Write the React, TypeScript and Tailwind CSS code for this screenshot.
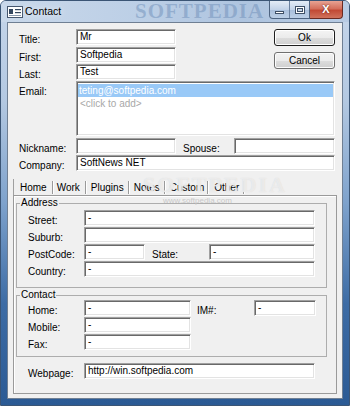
import React from "react";

function Box({ className, text }: { className: string; text?: string }) {
  return (
    <div
      className={
        "h-[16px] shrink-0 bg-white border border-t-[#a0a0a0] border-l-[#a0a0a0] border-b-white border-r-white shadow-[inset_1px_1px_0_#696969,inset_-1px_-1px_0_#e3e3e3] pl-[3px] flex items-center leading-[12px] text-black whitespace-nowrap overflow-hidden " +
        className
      }
    >
      {text}
    </div>
  );
}

function Label({ className, children }: { className: string; children: React.ReactNode }) {
  return <div className={"shrink-0 mt-[5px] leading-[12px] whitespace-nowrap " + className}>{children}</div>;
}

function Sep() {
  return <div className="w-[2px] h-[13px] border-l border-l-[#9a9a9a] border-r border-r-white shrink-0" />;
}

export default function App() {
  return (
    <div className="w-[350px] h-[406px] relative overflow-hidden font-['Liberation_Sans',Arial,sans-serif] text-[10px] text-black rounded-t-[6px] border border-[#3b5575] bg-[linear-gradient(180deg,#c6d6ea_0%,#b3c8e1_25%,#7ea2cc_50%,#3d6ca5_75%,#2b5a94_100%)] flex flex-col">
      {/* Title bar */}
      <div className="relative h-[21px] shrink-0 flex items-center pl-[6px] bg-[linear-gradient(90deg,#c9d8ea_0%,#bccfe6_40%,#aec4df_70%,#b8cbe3_100%)]">
        <div className="absolute left-[134px] top-[0px] font-['Liberation_Serif',serif] font-bold text-[21px] tracking-[1px] text-[#6f8fb9]/50 leading-none select-none">
          SOFTPEDIA
        </div>
        <svg width="16" height="12" viewBox="0 0 16 12" className="relative shrink-0">
          <rect x="0.5" y="0.5" width="15" height="11" fill="#ffffff" stroke="#45566e" />
          <rect x="2" y="3" width="4" height="5" fill="#34475f" />
          <rect x="8" y="3" width="6" height="1.2" fill="#34475f" />
          <rect x="8" y="6" width="6" height="1.2" fill="#34475f" />
          <rect x="2" y="9" width="12" height="1" fill="#8898ad" />
        </svg>
        <span className="relative ml-[2px] text-[10.5px] text-black [text-shadow:0_0_6px_#ffffff]">Contact</span>
        <div className="absolute top-0 right-[6px] flex h-[18px]">
          <div className="w-[41px] h-[18px] flex rounded-bl-[4px] border border-t-0 border-[#4d6380] bg-[linear-gradient(180deg,#e4ecf6_0%,#c3d3e8_50%,#a9bfdc_51%,#bccfe6_100%)] overflow-hidden">
            <div className="w-[20px] h-full flex items-center justify-center border-r border-r-[#6b819f]">
              <div className="w-[9px] h-[3px] bg-white border border-[#3e4f66] mt-[5px]" />
            </div>
            <div className="flex-1 h-full flex items-center justify-center">
              <div className="w-[10px] h-[8px] border border-[#3e4f66] bg-white flex items-center justify-center">
                <div className="w-[6px] h-[4px] border border-[#3e4f66] bg-[#c7d5e7]" />
              </div>
            </div>
          </div>
          <div className="w-[33px] h-[18px] rounded-br-[4px] border border-t-0 border-l-0 border-[#6a2a22] bg-[linear-gradient(180deg,#e8a393_0%,#d46f5c_45%,#c24a35_55%,#d0725c_100%)] flex items-center justify-center">
            <span className="text-white font-bold text-[11px] leading-none [text-shadow:0_0_2px_#5a1a10]">X</span>
          </div>
        </div>
      </div>

      {/* Client area */}
      <div className="relative mx-[6px] h-[377px] border border-[#6f7f93] bg-[#f0f0f0] flex flex-col">
        {/* watermarks */}
        <div className="absolute left-[135px] top-[151px] font-['Liberation_Serif',serif] font-bold text-[22px] tracking-[2px] text-white/50 [text-shadow:0_0_1px_#d4d4d4] leading-none pointer-events-none select-none">
          SOFTPEDIA
        </div>
        <div className="absolute left-[155px] top-[174px] text-[8px] text-[#c8c8c8] leading-none pointer-events-none select-none">
          www.softpedia.com
        </div>

        {/* Top fields */}
        <div className="relative flex pt-[6px] pl-[11px] pr-[7px]">
          <div className="flex flex-col">
            <div className="flex h-[16px]">
              <Label className="w-[57px]">Title:</Label>
              <Box className="w-[100px]" text="Mr" />
            </div>
            <div className="flex h-[16px] mt-[2px]">
              <Label className="w-[57px]">First:</Label>
              <Box className="w-[100px]" text="Softpedia" />
            </div>
            <div className="flex h-[16px] mt-[1px]">
              <Label className="w-[57px]">Last:</Label>
              <Box className="w-[100px]" text="Test" />
            </div>
          </div>
          <div className="ml-auto flex flex-col gap-[6px]">
            <div className="w-[61px] h-[17px] rounded-[3px] border border-[#1e1e1e] shadow-[inset_0_0_0_1px_#ffffff] bg-[linear-gradient(180deg,#f4f4f4_0%,#ebebeb_50%,#dddddd_51%,#cfcfcf_100%)] flex items-center justify-center leading-none">
              Ok
            </div>
            <div className="w-[61px] h-[17px] rounded-[3px] border border-[#707070] shadow-[inset_0_0_0_1px_#fcfcfc] bg-[linear-gradient(180deg,#f2f2f2_0%,#ebebeb_50%,#dddddd_51%,#cfcfcf_100%)] flex items-center justify-center leading-none">
              Cancel
            </div>
          </div>
        </div>

        <div className="relative flex mt-[1px] pl-[11px]">
          <Label className="w-[57px]">Email:</Label>
          <div className="w-[259px] h-[55px] bg-white border border-t-[#a0a0a0] border-l-[#a0a0a0] border-b-white border-r-white shadow-[inset_1px_1px_0_#696969,inset_-1px_-1px_0_#e3e3e3] p-[1px] flex flex-col">
            <div className="h-[13px] mt-[1px] bg-[#99c9f7] text-white leading-[13px] pl-[1px] whitespace-nowrap">teting@softpedia.com</div>
            <div className="h-[13px] leading-[13px] pl-[2px] text-[#a8a8a8] whitespace-nowrap">&lt;click to add&gt;</div>
          </div>
        </div>

        <div className="relative flex h-[16px] mt-[2px] pl-[11px]">
          <Label className="w-[57px]">Nickname:</Label>
          <Box className="w-[100px]" />
          <Label className="w-[51px] ml-[7px]">Spouse:</Label>
          <Box className="w-[101px]" />
        </div>
        <div className="relative flex h-[16px] mt-[1px] pl-[11px]">
          <Label className="w-[57px]">Company:</Label>
          <Box className="w-[259px]" text="SoftNews NET" />
        </div>

        {/* Tabs */}
        <div className="ml-[5px] w-[324px] mt-[8px] flex flex-col">
          <div className="h-[16px] flex items-center">
            <div className="w-[1px] h-[16px] bg-[#a0a0a0]" />
            <span className="ml-[6px] mr-[5px]">Home</span>
            <Sep />
            <span className="ml-[3px] mr-[5px]">Work</span>
            <Sep />
            <span className="ml-[4px] mr-[4px]">Plugins</span>
            <Sep />
            <span className="ml-[4px] mr-[4px]">Notes</span>
            <Sep />
            <span className="ml-[4px] mr-[3px]">Custom</span>
            <Sep />
            <span className="ml-[5px] mr-[4px]">Other</span>
            <Sep />
          </div>
          <div className="h-[199px] border border-[#9a9a9a] shadow-[inset_1px_1px_0_#ffffff] flex flex-col">
            <fieldset className="ml-[2px] mt-[1px] w-[311px] border border-[#adadad] pb-[10px]">
              <legend className="ml-[3px] px-[1px] leading-[12px]">Address</legend>
              <div className="flex h-[16px] mt-[1px] pl-[11px]">
                <Label className="w-[56px]">Street:</Label>
                <Box className="w-[231px]" text="-" />
              </div>
              <div className="flex h-[16px] mt-[1px] pl-[11px]">
                <Label className="w-[56px]">Suburb:</Label>
                <Box className="w-[231px]" />
              </div>
              <div className="flex h-[16px] mt-[1px] pl-[11px]">
                <Label className="w-[56px]">PostCode:</Label>
                <Box className="w-[61px]" text="-" />
                <Label className="w-[57px] ml-[7px]">State:</Label>
                <Box className="w-[106px]" text="-" />
              </div>
              <div className="flex h-[16px] mt-[1px] pl-[11px]">
                <Label className="w-[56px]">Country:</Label>
                <Box className="w-[231px]" text="-" />
              </div>
            </fieldset>

            <fieldset className="ml-[2px] mt-[1px] w-[311px] border border-[#adadad] pb-[6px]">
              <legend className="ml-[3px] px-[1px] leading-[12px]">Contact</legend>
              <div className="flex h-[16px] mt-[-1px] pl-[11px]">
                <Label className="w-[56px]">Home:</Label>
                <Box className="w-[107px]" text="-" />
                <Label className="w-[57px] ml-[6px]">IM#:</Label>
                <Box className="w-[62px]" text="-" />
              </div>
              <div className="flex h-[16px] mt-[1px] pl-[11px]">
                <Label className="w-[56px]">Mobile:</Label>
                <Box className="w-[107px]" text="-" />
              </div>
              <div className="flex h-[16px] mt-[1px] pl-[11px]">
                <Label className="w-[56px]">Fax:</Label>
                <Box className="w-[107px]" text="-" />
              </div>
            </fieldset>

            <div className="flex h-[16px] mt-[6px] pl-[14px]">
              <Label className="w-[56px]">Webpage:</Label>
              <Box className="w-[231px]" text="http://win.softpedia.com" />
            </div>
          </div>
        </div>
      </div>
    </div>
  );
}
